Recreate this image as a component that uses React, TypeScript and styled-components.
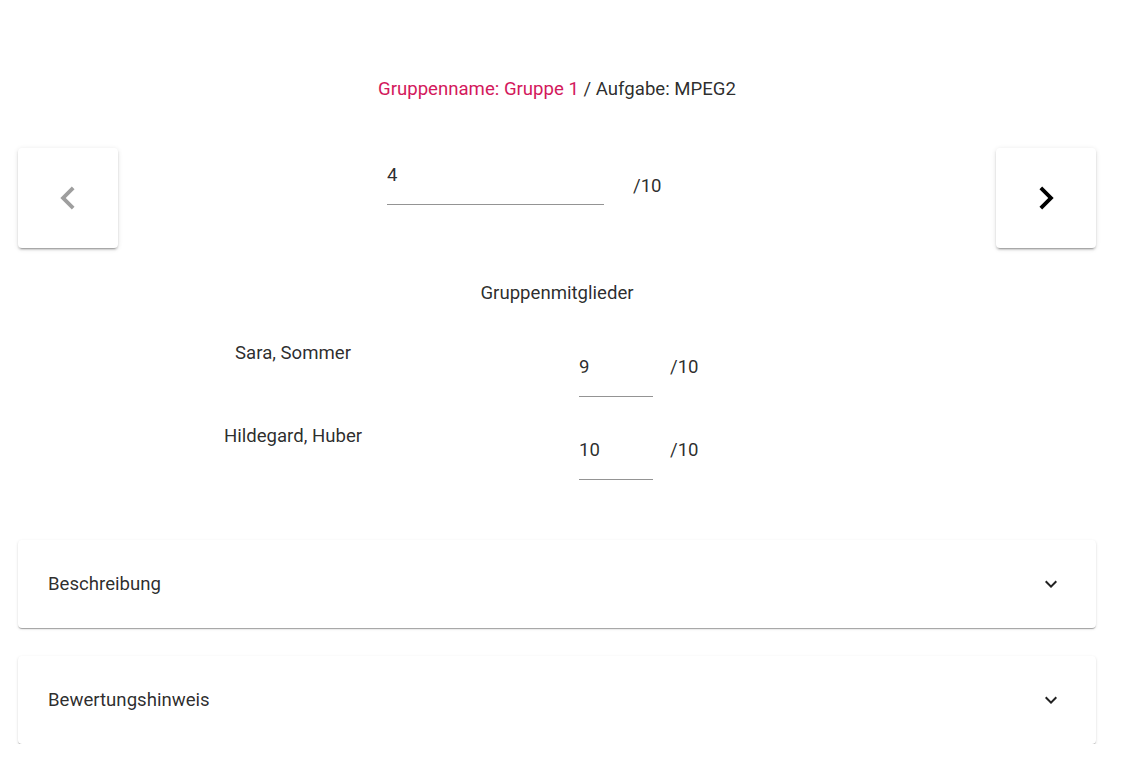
import React from "react";
import styled, { createGlobalStyle } from "styled-components";

const GlobalStyle = createGlobalStyle`
  html, body { margin: 0; padding: 0; background: #fff; }
  body {
    font-family: Roboto, "Noto Sans", "Liberation Sans", sans-serif;
    color: rgba(0, 0, 0, 0.84);
  }
`;

const Container = styled.div`
  width: 1078px;
  margin-left: 18px;
  display: flex;
  flex-direction: column;
`;

const Text = styled.div`
  font-size: 18.6px;
  font-weight: 400;
  line-height: 19px;
`;

const Title = styled(Text)`
  margin-top: 80px;
  text-align: center;
`;

const Accent = styled.span`
  color: #d3195c;
`;

const NavRow = styled.div`
  margin-top: 49px;
  display: flex;
  align-items: flex-start;
  height: 100px;
`;

const NavButton = styled.button<{ $disabled?: boolean }>`
  width: 100px;
  height: 100px;
  border: none;
  border-radius: 4px;
  background: #fff;
  display: flex;
  align-items: center;
  justify-content: center;
  padding: 0;
  cursor: ${(p) => (p.$disabled ? "default" : "pointer")};
  color: ${(p) => (p.$disabled ? "rgba(0,0,0,0.38)" : "#000")};
  box-shadow: 0px 3px 1px -2px rgba(0,0,0,0.2), 0px 2px 2px 0px rgba(0,0,0,0.14), 0px 1px 5px 0px rgba(0,0,0,0.12);
`;

const NavCenter = styled.div`
  flex: 1;
  display: flex;
  align-items: flex-start;
  padding-left: 269px;
  padding-top: 18px;
`;

const Field = styled(Text)<{ $width: number }>`
  width: ${(p) => p.$width}px;
  border-bottom: 1px solid rgba(0, 0, 0, 0.42);
  padding-bottom: 19px;
`;

const Max = styled(Text)<{ $gap: number; $top: number }>`
  margin-left: ${(p) => p.$gap}px;
  margin-top: ${(p) => p.$top}px;
`;

const SectionLabel = styled(Text)`
  margin-top: 36px;
  text-align: center;
`;

const Members = styled.div`
  margin-top: 41px;
  display: grid;
  grid-template-columns: 550px auto 1fr;
  row-gap: 30px;
  align-items: start;
`;

const MemberName = styled(Text)`
  text-align: center;
`;

const MemberField = styled.div`
  margin-left: 11px;
  padding-top: 14px;
`;

const MemberMax = styled(Text)`
  padding-top: 14px;
  margin-left: 17px;
`;

const Accordions = styled.div`
  margin-top: 60px;
  display: flex;
  flex-direction: column;
  gap: 28px;
`;

const Accordion = styled.div`
  height: 88px;
  border-radius: 4px;
  background: #fff;
  display: flex;
  align-items: center;
  justify-content: space-between;
  padding: 0 33px 0 30px;
  font-size: 18.6px;
  box-shadow: 0px 2px 1px -1px rgba(0,0,0,0.2), 0px 1px 1px 0px rgba(0,0,0,0.14), 0px 1px 3px 0px rgba(0,0,0,0.12);
`;

const ExpandIcon = () => (
  <svg width="24" height="24" viewBox="0 0 24 24" fill="rgba(0,0,0,0.87)">
    <path d="M16.59 8.59L12 13.17 7.41 8.59 6 10l6 6 6-6z" />
  </svg>
);

const ChevronLeft = () => (
  <svg width="46" height="46" viewBox="0 0 24 24" fill="currentColor">
    <path d="M15.41 7.41L14 6l-6 6 6 6 1.41-1.41L10.83 12z" />
  </svg>
);

const ChevronRight = () => (
  <svg width="46" height="46" viewBox="0 0 24 24" fill="currentColor">
    <path d="M10 6L8.59 7.41 13.17 12l-4.58 4.59L10 18l6-6z" />
  </svg>
);

const members = [
  { name: "Sara, Sommer", points: "9" },
  { name: "Hildegard, Huber", points: "10" },
];

export default function App() {
  return (
    <>
      <GlobalStyle />
      <Container>
        <Title>
          <Accent>Gruppenname: Gruppe 1</Accent> / Aufgabe: MPEG2
        </Title>
        <NavRow>
          <NavButton $disabled>
            <ChevronLeft />
          </NavButton>
          <NavCenter>
            <Field $width={217}>4</Field>
            <Max $gap={29} $top={11}>/10</Max>
          </NavCenter>
          <NavButton>
            <ChevronRight />
          </NavButton>
        </NavRow>
        <SectionLabel>Gruppenmitglieder</SectionLabel>
        <Members>
          {members.map((m) => (
            <React.Fragment key={m.name}>
              <MemberName>{m.name}</MemberName>
              <MemberField>
                <Field $width={74}>{m.points}</Field>
              </MemberField>
              <MemberMax>/10</MemberMax>
            </React.Fragment>
          ))}
        </Members>
        <Accordions>
          <Accordion>
            <span>Beschreibung</span>
            <ExpandIcon />
          </Accordion>
          <Accordion>
            <span>Bewertungshinweis</span>
            <ExpandIcon />
          </Accordion>
        </Accordions>
      </Container>
    </>
  );
}
